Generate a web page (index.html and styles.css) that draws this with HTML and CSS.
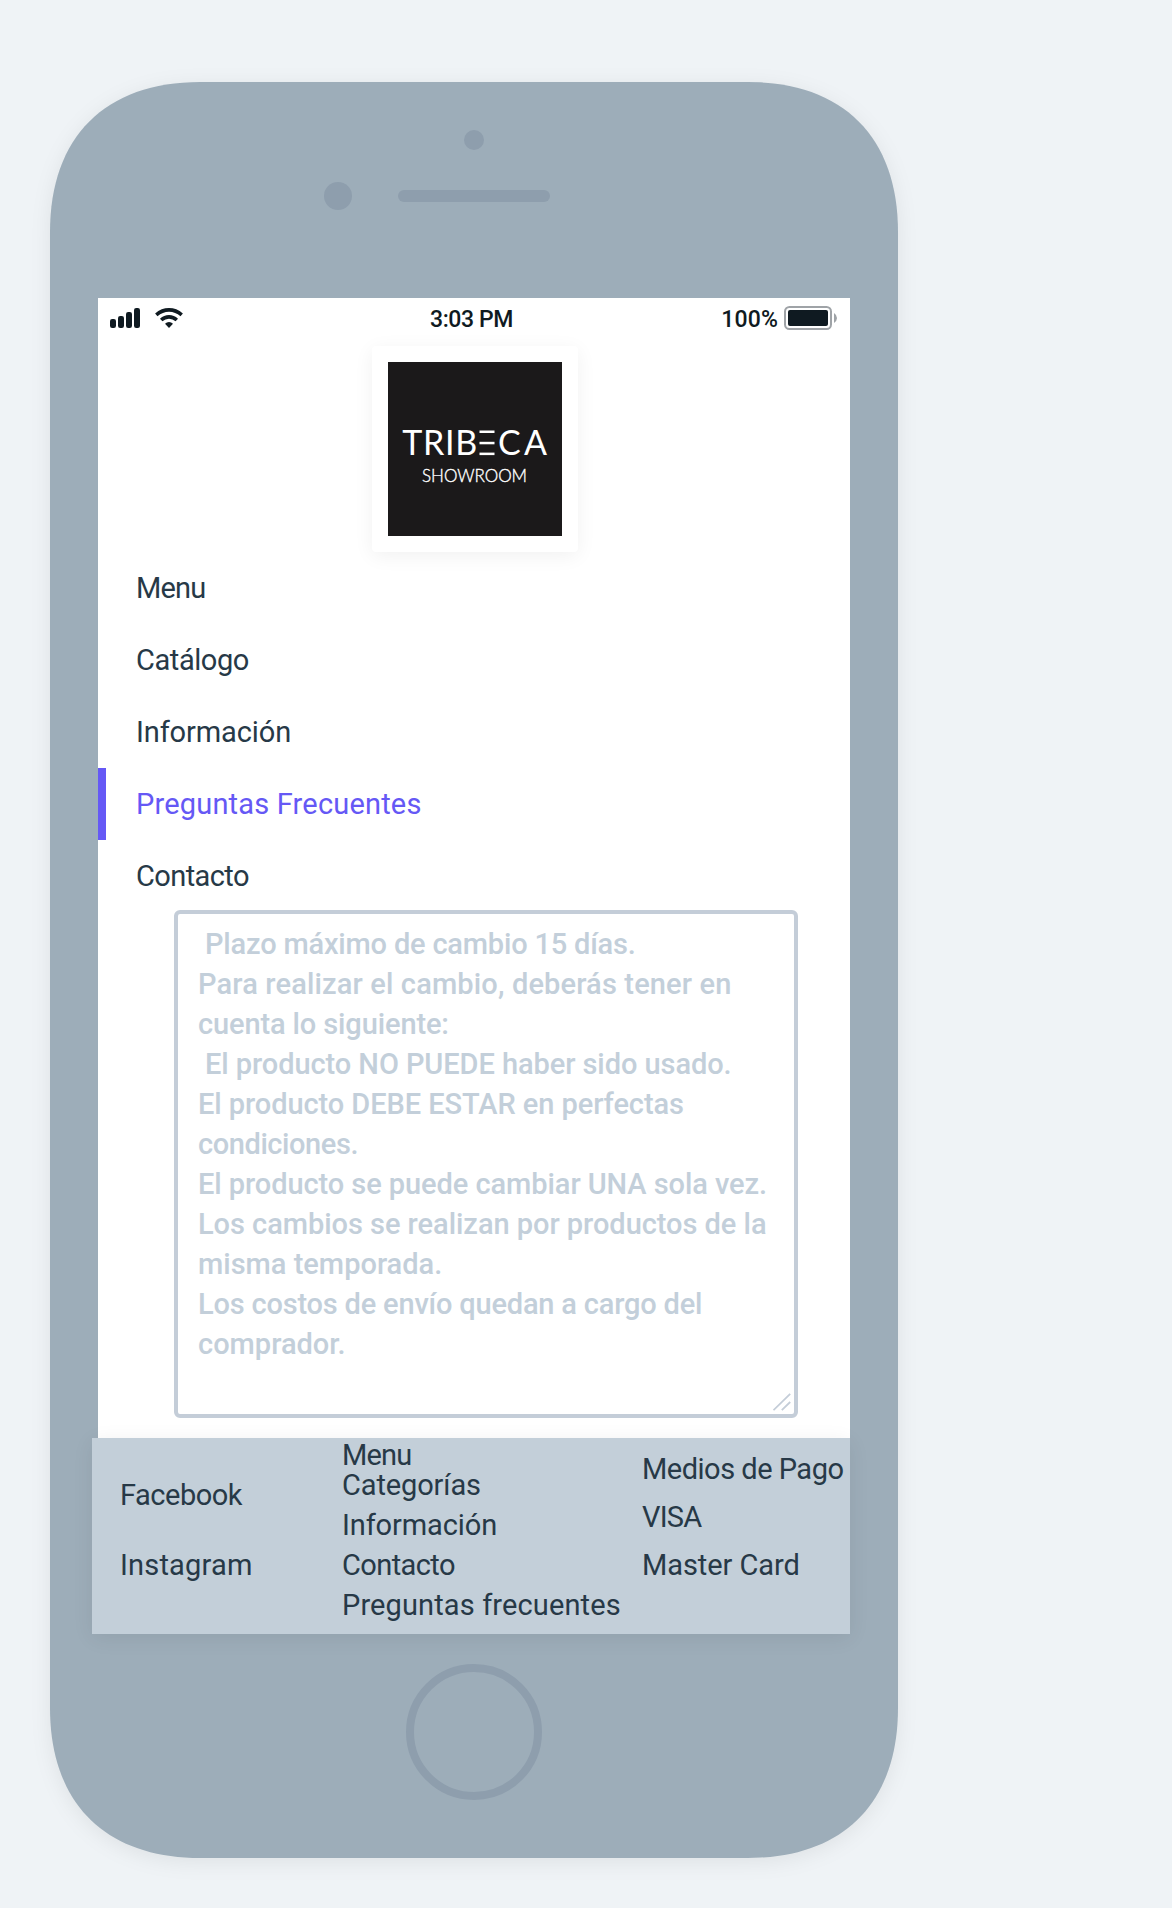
FILE: index.html
```html
<!DOCTYPE html>
<html lang="es">
<head>
<meta charset="utf-8">
<title>Tribeca Showroom</title>
<link rel="stylesheet" href="styles.css">
</head>
<body>
<div class="phone">
  <svg class="shell" viewBox="0 0 848 1776" width="848" height="1776" aria-hidden="true">
    <path d="M0 150C0 55 55 0 150 0H698C793 0 848 55 848 150V1626C848 1721 793 1776 698 1776H150C55 1776 0 1721 0 1626Z" fill="#9dadb9"/>
  </svg>
  <div class="top">
    <span class="sensor"></span>
    <div class="earpiece"><span class="camera"></span><span class="speaker"></span></div>
  </div>

  <div class="screen">
    <div class="status">
      <div class="signals">
        <svg width="30" height="20" viewBox="0 0 30 20" fill="#0f1a21">
          <rect x="0" y="11" width="6" height="9" rx="2.2"/><rect x="8" y="8" width="6" height="12" rx="2.2"/><rect x="16" y="4" width="6" height="16" rx="2.2"/><rect x="24" y="0" width="6" height="20" rx="2.2"/>
        </svg>
        <svg width="28" height="20" viewBox="0 0 28 20" fill="none" stroke="#0f1a21" stroke-width="3.6">
          <path d="M1.3 6.9Q7 1.9 14 1.9T26.7 6.9"/>
          <path d="M6.2 12Q9.6 8.9 14 8.9T21.8 12"/>
          <path d="M10 15.8Q11.8 14.1 14 14.1T18 15.8L14 20Z" fill="#0f1a21" stroke="none"/>
        </svg>
      </div>
      <span class="clock">3:03 PM</span>
      <div class="power">
        <span class="percent">100%</span>
        <svg width="54" height="24" viewBox="0 0 54 24">
          <rect x="1" y="1" width="46" height="22" rx="4.5" fill="none" stroke="#9fa3a7" stroke-width="2"/>
          <rect x="4" y="4" width="40" height="16" rx="2" fill="#0f1a21"/>
          <path d="M50 7Q53 9 53 12T50 17Z" fill="#9fa3a7"/>
        </svg>
      </div>
    </div>

    <div class="logo-card">
      <svg class="logo" width="174" height="174" viewBox="0 0 174 174">
        <rect width="174" height="174" fill="#1b191a"/>
        <g fill="#fff" class="brand">
          <text x="14.3" y="93" textLength="75" font-size="34">TRIB</text>
          <rect x="91.5" y="68.5" width="15" height="2.5"/><rect x="91.5" y="79.8" width="15" height="2.5"/><rect x="91.5" y="90.6" width="15" height="2.5"/>
          <text x="110" y="93" textLength="49" font-size="34">CA</text>
          <text x="34" y="120" textLength="105" font-size="17" class="sub">SHOWROOM</text>
        </g>
      </svg>
    </div>

    <nav class="menu">
      <a class="t-80">Menu</a>
      <a class="t-40">Catálogo</a>
      <a class="t-13">Información</a>
      <a class="t18 active">Preguntas Frecuentes</a>
      <a class="t-57">Contacto</a>
    </nav>

    <div class="policy">
      <p class="t-18 indent">Plazo máximo de cambio 15 días.</p>
      <p class="t15">Para realizar el cambio, deberás tener en</p>
      <p class="t-13">cuenta lo siguiente:</p>
      <p class="t-6 indent">El producto NO PUEDE haber sido usado.</p>
      <p class="t-6">El producto DEBE ESTAR en perfectas</p>
      <p class="t-40">condiciones.</p>
      <p class="t-6">El producto se puede cambiar UNA sola vez.</p>
      <p class="t-4">Los cambios se realizan por productos de la</p>
      <p>misma temporada.</p>
      <p class="t-18">Los costos de envío quedan a cargo del</p>
      <p>comprador.</p>
      <svg class="grip" width="18" height="18" viewBox="0 0 18 18" stroke="#c4cdd8" stroke-width="1.8"><path d="M.5 17.2L17.2.8M8.8 17.2L17.2 9"/></svg>
    </div>

    <footer class="footer">
      <div class="social"><a class="t-50">Facebook</a><a class="t18">Instagram</a></div>
      <div class="links"><a class="first t-80">Menu</a><a class="t-13">Categorías</a><a class="t-13">Información</a><a class="t-57">Contacto</a><a class="t12">Preguntas frecuentes</a></div>
      <div class="payment"><a class="t-50">Medios de Pago</a><a class="t-80">VISA</a><a class="t-6">Master Card</a></div>
    </footer>
  </div>

  <span class="home"></span>
</div>
</body>
</html>
```
FILE: styles.css
```css
* { box-sizing: border-box; }

body {
  margin: 0;
  padding: 82px 0 0 50px;
  min-height: 1908px;
  background: #eff3f6;
  color: #273947;
  font: 400 29px/40px Roboto, sans-serif;
}

.phone {
  position: relative;
  isolation: isolate;
  display: flex;
  flex-direction: column;
  align-items: center;
  width: 848px;
  height: 1776px;
}

.shell {
  position: absolute;
  inset: 0;
  z-index: -1;
  overflow: visible;
  filter: drop-shadow(0 4px 10px rgba(0, 0, 0, .07));
}

.top {
  display: flex;
  flex-direction: column;
  align-items: center;
  gap: 32px;
  width: 100%;
  height: 216px;
  padding-top: 48px;
}

.sensor { width: 20px; height: 20px; border-radius: 50%; background: #8e9ead; }
.earpiece { display: flex; align-items: center; gap: 46px; margin-right: 74px; }
.camera { width: 28px; height: 28px; border-radius: 50%; background: #8e9ead; }
.speaker { width: 152px; height: 12px; border-radius: 6px; background: #8e9ead; }

.screen {
  display: flex;
  flex-direction: column;
  width: 752px;
  height: 1336px;
  background: #fff;
}

.status {
  display: grid;
  grid-template-columns: 1fr auto 1fr;
  align-items: center;
  height: 40px;
  padding: 0 12px;
  color: #0f1a21;
  font-size: 23px;
  font-weight: 500;
  line-height: 30px;
}

.signals { display: flex; gap: 15px; }
.clock { padding: 3px 5px 0 0; letter-spacing: -.4px; }
.power { display: flex; align-items: center; justify-content: flex-end; gap: 6px; }
.percent { padding-top: 3px; letter-spacing: .16px; }

.logo-card {
  width: 206px;
  height: 206px;
  margin: 8px 0 0 274px;
  padding: 16px;
  border-radius: 4px;
  background: #fff;
  box-shadow: 0 4px 20px rgba(0, 0, 0, .06);
}

.logo { display: block; }
.brand { font-family: Lato, sans-serif; font-weight: 400; }
.brand .sub { font-weight: 300; stroke: #fff; stroke-width: .35; }

.menu { display: flex; flex-direction: column; }
.menu a { height: 72px; padding-left: 38px; line-height: 72px; }
.menu .active {
  padding-left: 30px;
  border-left: 8px solid #6558f5;
  color: #6558f5;
}

.policy {
  position: relative;
  width: 624px;
  height: 508px;
  margin: -2px 0 20px 76px;
  padding: 10px 0 0 20px;
  border: 4px solid #c4cdd8;
  border-radius: 6px;
  color: #c3cfda;
  font-weight: 500;
  white-space: nowrap;
}

.policy p { margin: 0; }
.policy .indent { padding-left: 7px; }
.grip { position: absolute; right: 3px; bottom: 3px; }

.footer {
  display: grid;
  grid-template-columns: 222px 300px 1fr;
  width: 758px;
  height: 196px;
  margin-left: -6px;
  padding-left: 28px;
  background: #c3cfd9;
  box-shadow: 0 4px 20px rgba(0, 0, 0, .07);
  white-space: nowrap;
}

.footer > div { display: flex; flex-direction: column; }
.social { padding-top: 22px; line-height: 70px; }
.links { padding-top: 7px; }
.links .first { line-height: 20px; }
.payment { padding-top: 7px; line-height: 48px; }

.home {
  width: 136px;
  height: 136px;
  margin-top: 30px;
  border: 8px solid #8e9ead;
  border-radius: 50%;
}

/* letter-spacing steps */
.t-80 { letter-spacing: -.8px; }
.t-57 { letter-spacing: -.6px; }
.t-50 { letter-spacing: -.5px; }
.t-40 { letter-spacing: -.42px; }
.t-18 { letter-spacing: -.19px; }
.t-13 { letter-spacing: -.12px; }
.t-6 { letter-spacing: -.07px; }
.t-4 { letter-spacing: -.04px; }
.t12 { letter-spacing: .12px; }
.t15 { letter-spacing: .15px; }
.t18 { letter-spacing: .18px; }
```
